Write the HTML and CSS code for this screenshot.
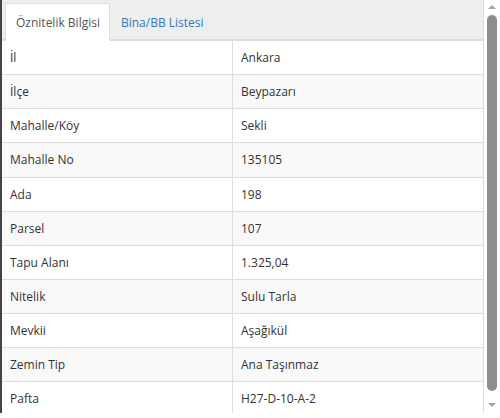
FILE: index.html
```html
<!DOCTYPE html>
<html lang="tr">
<head>
<meta charset="utf-8">
<link rel="stylesheet" href="styles.css">
</head>
<body>
<div class="panel">
  <div class="content">
    <ul class="tabs">
      <li class="tab active">Öznitelik Bilgisi</li>
      <li class="tab"><a href="#">Bina/BB Listesi</a></li>
    </ul>
    <table class="attrs">
      <tr><td>İl</td><td>Ankara</td></tr>
      <tr><td>İlçe</td><td>Beypazarı</td></tr>
      <tr><td>Mahalle/Köy</td><td>Sekli</td></tr>
      <tr><td>Mahalle No</td><td>135105</td></tr>
      <tr><td>Ada</td><td>198</td></tr>
      <tr><td>Parsel</td><td>107</td></tr>
      <tr><td>Tapu Alanı</td><td>1.325,04</td></tr>
      <tr><td>Nitelik</td><td>Sulu Tarla</td></tr>
      <tr><td>Mevkii</td><td>Aşağıkül</td></tr>
      <tr><td>Zemin Tip</td><td>Ana Taşınmaz</td></tr>
      <tr><td>Pafta</td><td>H27-D-10-A-2</td></tr>
    </table>
  </div>
  <div class="scrollbar">
    <div class="arrow up"></div>
    <div class="thumb"></div>
    <div class="arrow down"></div>
  </div>
</div>
</body>
</html>
```
FILE: styles.css
```css
html, body {
  margin: 0;
  padding: 0;
  background: #fff;
}
body {
  font-family: "Open Sans", "Noto Sans", sans-serif;
  font-size: 12px;
  color: #333;
}
.panel {
  display: flex;
  width: 500px;
  height: 413px;
  overflow: hidden;
}
.content {
  flex: 1;
  border-left: 2px solid #444;
  border-right: 1px solid #ddd;
  min-width: 0;
}
.tabs {
  list-style: none;
  margin: 0;
  padding: 3px 0 0 3px;
  display: flex;
  background: #eee;
  border-bottom: 1px solid #ddd;
  height: 36px;
}
.tab {
  padding: 0 9px 0 10px;
  line-height: 37px;
  margin-bottom: -1px;
  border: 1px solid transparent;
  height: 36px;
}
.tab.active {
  background: #fff;
  border-color: #ddd;
  border-bottom-color: #fff;
  color: #555;
}
.tab a {
  color: #337ab7;
  text-decoration: none;
}
.attrs {
  width: 100%;
  border-collapse: collapse;
}
.attrs td {
  padding: 8px;
  line-height: 1.42857143;
  border-top: 1px solid #ddd;
  vertical-align: top;
}
.attrs td:first-child {
  width: 214px;
  border-right: 1px solid #ddd;
}
.attrs tr:nth-child(even) td {
  background: #f9f9f9;
}
.scrollbar {
  width: 16px;
  display: flex;
  flex-direction: column;
  align-items: center;
  background: #fff;
}
.arrow {
  width: 0;
  height: 0;
  border-left: 4px solid transparent;
  border-right: 4px solid transparent;
}
.arrow.up {
  margin-top: 5px;
  border-bottom: 4px solid #a3a3a3;
}
.arrow.down {
  margin-top: 12px;
  border-top: 4px solid #a3a3a3;
}
.thumb {
  margin-top: 6px;
  width: 10px;
  height: 376px;
  background: #8e8e8e;
  border-radius: 5px;
}
```
